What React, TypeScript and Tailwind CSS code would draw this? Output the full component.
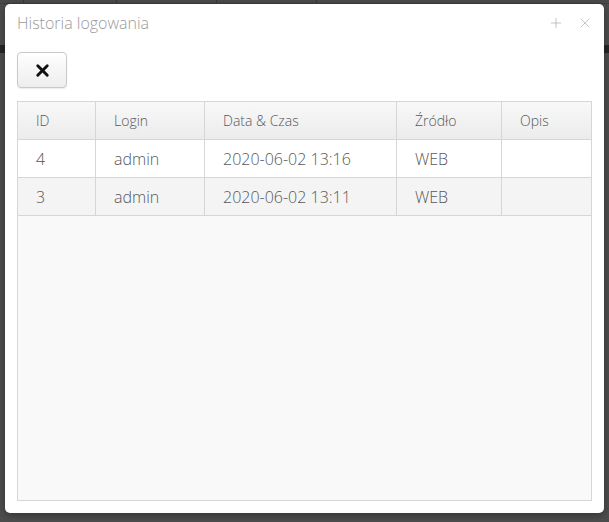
import { X, Plus } from 'lucide-react'

const rows = [
  { id: '4', login: 'admin', date: '2020-06-02 13:16', src: 'WEB', desc: '' },
  { id: '3', login: 'admin', date: '2020-06-02 13:11', src: 'WEB', desc: '' },
]

const cols = ['ID', 'Login', 'Data & Czas', 'Źródło', 'Opis']
const widths = ['w-[78px]', 'w-[109px]', 'w-[192px]', 'w-[105px]', 'flex-1']

export default function App() {
  return (
    <div
      className="relative h-[522px] w-[609px] overflow-hidden bg-[#4d4d4d]"
      style={{ fontFamily: '"Open Sans", "Noto Sans", sans-serif' }}
    >
      {/* page behind overlay */}
      <div className="flex h-[4px] border-b border-[#3f3f3f] bg-[#4b4b4b]">
        <div className="w-[24px] border-r border-[#3a3a3a]" />
        <div className="w-[93px] border-r border-[#3a3a3a]" />
        <div className="w-[100px] border-r border-[#3a3a3a]" />
        <div className="w-[100px] border-r border-[#3a3a3a]" />
        <div className="flex-1" />
      </div>
      <div className="mt-[41px] h-[8px] bg-[#262626]" />

      {/* modal */}
      <div className="absolute left-[5px] top-[4px] flex h-[509px] w-[599px] flex-col rounded-[5px] bg-white shadow-[0_2px_8px_rgba(0,0,0,0.35)]">
        <div className="flex h-[36px] items-center justify-between pl-[12px] pr-[11px] pt-[2px]">
          <span className="text-[16px] font-light text-[#9a9a9a]">Historia logowania</span>
          <div className="flex items-center gap-[13px] text-[#b0b0b0]">
            <Plus size={16} strokeWidth={1.1} />
            <X size={16} strokeWidth={1.1} />
          </div>
        </div>

        <div className="px-[12px] pt-[12px]">
          <button className="flex h-[36px] w-[50px] items-center justify-center rounded-[4px] border border-[#c8c8c8] bg-gradient-to-b from-white to-[#ededed] shadow-[0_1px_1px_rgba(0,0,0,0.08)]">
            <X size={19} strokeWidth={3.6} className="text-[#111]" />
          </button>
        </div>

        <div className="mx-[12px] mt-[13px] mb-[12px] flex flex-1 flex-col border border-[#d6d6d6] bg-[#f9f9f9] text-[#585858]">
          <div className="flex h-[38px] border-b border-[#d6d6d6] bg-gradient-to-b from-[#f8f8f8] to-[#ececec] text-[14px] font-light">
            {cols.map((c, i) => (
              <div
                key={c}
                className={`${widths[i]} flex items-center pl-[18px] ${i < 4 ? 'border-r border-[#d6d6d6]' : ''}`}
              >
                {c}
              </div>
            ))}
          </div>
          {rows.map((r, ri) => (
            <div
              key={r.id}
              className={`flex h-[38px] border-b border-[#d6d6d6] text-[16px] font-light ${ri % 2 === 0 ? 'bg-white' : 'bg-[#f4f4f4]'}`}
            >
              {[r.id, r.login, r.date, r.src, r.desc].map((v, i) => (
                <div
                  key={i}
                  className={`${widths[i]} flex items-center pl-[18px] ${i < 4 ? 'border-r border-[#d6d6d6]' : ''}`}
                >
                  {v}
                </div>
              ))}
            </div>
          ))}
        </div>
      </div>
    </div>
  )
}
